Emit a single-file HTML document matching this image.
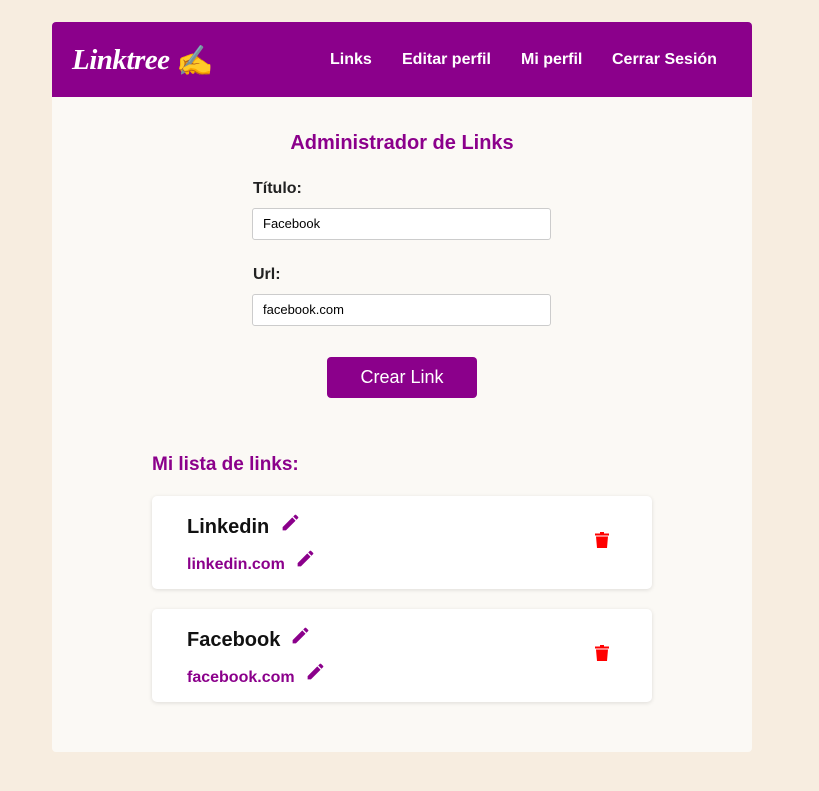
<!DOCTYPE html>
<html><head><style>
body{margin:0;background:#f7ede0;font-family:"Liberation Sans",sans-serif;}
.card{position:absolute;left:52px;top:22px;width:700px;height:730px;background:#fbf9f5;border-radius:4px;overflow:hidden;}
.nav{height:75px;background:#8b008b;position:relative;}
.logo{position:absolute;left:20px;top:20px;color:#fff;font-family:"Liberation Serif",serif;font-style:italic;font-weight:bold;font-size:29px;letter-spacing:-0.5px;}
.nav a{position:absolute;top:29px;color:#fff;font-weight:bold;font-size:16px;}
h2{position:absolute;top:110px;left:0;width:700px;text-align:center;margin:0;color:#8b008b;font-size:20px;}
label{position:absolute;left:201px;font-weight:bold;font-size:16px;color:#222;}
.inp{position:absolute;left:200px;width:287px;height:30px;border:1px solid #ccc;border-radius:3px;background:#fff;font-size:13px;line-height:30px;padding-left:10px;}
.btn{position:absolute;left:275px;top:335px;width:150px;height:41px;background:#8b008b;color:#fff;border-radius:4px;text-align:center;line-height:41px;font-size:18px;}
h3{position:absolute;left:100px;top:432px;margin:0;color:#8b008b;font-size:19px;}
.item{position:absolute;left:100px;width:500px;height:93px;background:#fff;border-radius:5px;box-shadow:0 1px 4px rgba(0,0,0,.12);}
.t{position:absolute;left:35px;top:20px;font-size:20px;font-weight:bold;color:#111;}
.u{position:absolute;left:35px;top:60px;font-size:16px;font-weight:bold;color:#8b008b;}
.p{position:absolute;}
</style></head><body>
<div class="card">
<div class="nav"><div class="logo">Linktree <span style="font-style:normal;font-size:30px;position:relative;top:2px">✍</span></div>
<a style="left:278px">Links</a><a style="left:350px">Editar perfil</a><a style="left:469px">Mi perfil</a><a style="left:560px">Cerrar Sesión</a></div>
<h2>Administrador de Links</h2>
<label style="top:158px">Título:</label>
<div class="inp" style="top:186px">Facebook</div>
<label style="top:244px">Url:</label>
<div class="inp" style="top:272px">facebook.com</div>
<div class="btn">Crear Link</div>
<h3>Mi lista de links:</h3>
<div class="item" style="top:474px">
<div class="t">Linkedin</div>
<svg class="p" style="left:128px;top:16px" width="21" height="21" viewBox="0 0 24 24"><path fill="#8b008b" d="M3 17.25V21h3.75L17.8 9.94l-3.75-3.75L3 17.25zM20.7 7.04a1 1 0 000-1.41l-2.34-2.34a1 1 0 00-1.41 0l-1.83 1.83 3.75 3.75 1.83-1.83z"/></svg>
<div class="u">linkedin.com</div>
<svg class="p" style="left:143px;top:52px" width="21" height="21" viewBox="0 0 24 24"><path fill="#8b008b" d="M3 17.25V21h3.75L17.8 9.94l-3.75-3.75L3 17.25zM20.7 7.04a1 1 0 000-1.41l-2.34-2.34a1 1 0 00-1.41 0l-1.83 1.83 3.75 3.75 1.83-1.83z"/></svg>
<svg class="p" style="left:443px;top:35px" width="14" height="18" viewBox="0 0 14 16"><path fill="#f00" d="M5 0h4v1.5h5v2H0v-2h5zM1 4.5h12l-1 11.5H2z"/></svg>
</div>
<div class="item" style="top:587px">
<div class="t">Facebook</div>
<svg class="p" style="left:138px;top:16px" width="21" height="21" viewBox="0 0 24 24"><path fill="#8b008b" d="M3 17.25V21h3.75L17.8 9.94l-3.75-3.75L3 17.25zM20.7 7.04a1 1 0 000-1.41l-2.34-2.34a1 1 0 00-1.41 0l-1.83 1.83 3.75 3.75 1.83-1.83z"/></svg>
<div class="u">facebook.com</div>
<svg class="p" style="left:153px;top:52px" width="21" height="21" viewBox="0 0 24 24"><path fill="#8b008b" d="M3 17.25V21h3.75L17.8 9.94l-3.75-3.75L3 17.25zM20.7 7.04a1 1 0 000-1.41l-2.34-2.34a1 1 0 00-1.41 0l-1.83 1.83 3.75 3.75 1.83-1.83z"/></svg>
<svg class="p" style="left:443px;top:35px" width="14" height="18" viewBox="0 0 14 16"><path fill="#f00" d="M5 0h4v1.5h5v2H0v-2h5zM1 4.5h12l-1 11.5H2z"/></svg>
</div>
</div>
</body></html>
